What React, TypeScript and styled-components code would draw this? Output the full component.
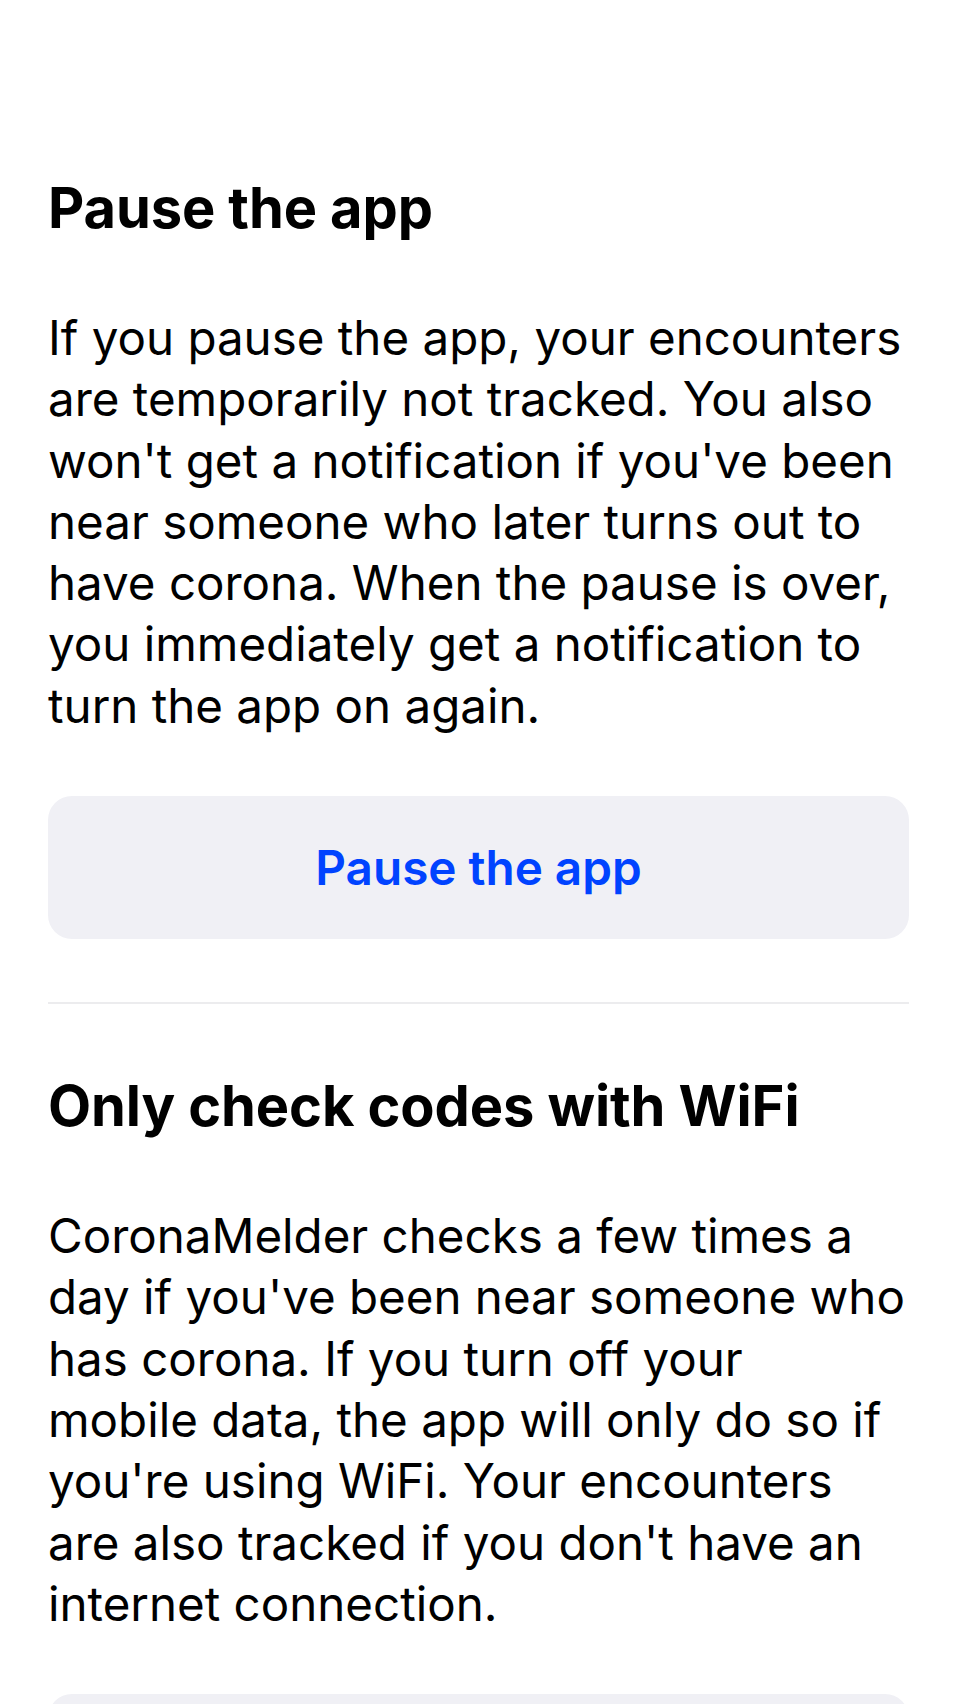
import React from "react";
import styled, { createGlobalStyle } from "styled-components";

const GlobalStyle = createGlobalStyle`
  body {
    margin: 0;
    background: #ffffff;
    font-family: Inter, "Noto Sans", sans-serif;
    color: #000000;
    -webkit-font-smoothing: antialiased;
  }
`;

type Setting = {
  title: string;
  text: string;
  action: string;
};

const settings: Setting[] = [
  {
    title: "Pause the app",
    text:
      "If you pause the app, your encounters are temporarily not tracked. You also won't get a notification if you've been near someone who later turns out to have corona. When the pause is over, you immediately get a notification to turn the app on again.",
    action: "Pause the app",
  },
  {
    title: "Only check codes with WiFi",
    text:
      "CoronaMelder checks a few times a day if you've been near someone who has corona. If you turn off your mobile\u00a0data, the app will only do so if you're using WiFi. Your encounters are also tracked if you don't have an internet connection.",
    action: "Use mobile data",
  },
];

export default function App() {
  return (
    <>
      <GlobalStyle />
      <Page>
        {settings.map((item, index) => (
          <React.Fragment key={item.title}>
            {index > 0 && <Divider />}
            <Section>
              <Title>{item.title}</Title>
              <Body>{item.text}</Body>
              <ActionButton type="button">{item.action}</ActionButton>
            </Section>
          </React.Fragment>
        ))}
      </Page>
    </>
  );
}

const Page = styled.main`
  display: flex;
  flex-direction: column;
  padding: 106px 51px 40px 48px;
`;

const Section = styled.section`
  display: flex;
  flex-direction: column;
  padding: 69px 0 63px;
`;

const Title = styled.h2`
  margin: 0 0 65px;
  font-size: 56px;
  line-height: 67px;
  font-weight: 700;
  letter-spacing: -0.1px;
`;

const Body = styled.p`
  margin: 0 0 60px;
  font-size: 47.5px;
  line-height: 61.3px;
  font-weight: 400;
`;

const ActionButton = styled.button`
  display: flex;
  align-items: center;
  justify-content: center;
  height: 143px;
  padding: 0;
  border: none;
  border-radius: 24px;
  background: #f0f0f5;
  color: #0043ff;
  font-family: Inter, "Noto Sans", sans-serif;
  font-size: 47.7px;
  font-weight: 600;
  cursor: pointer;
`;

const Divider = styled.hr`
  margin: 0;
  height: 2px;
  border: none;
  background: #ececee;
`;
